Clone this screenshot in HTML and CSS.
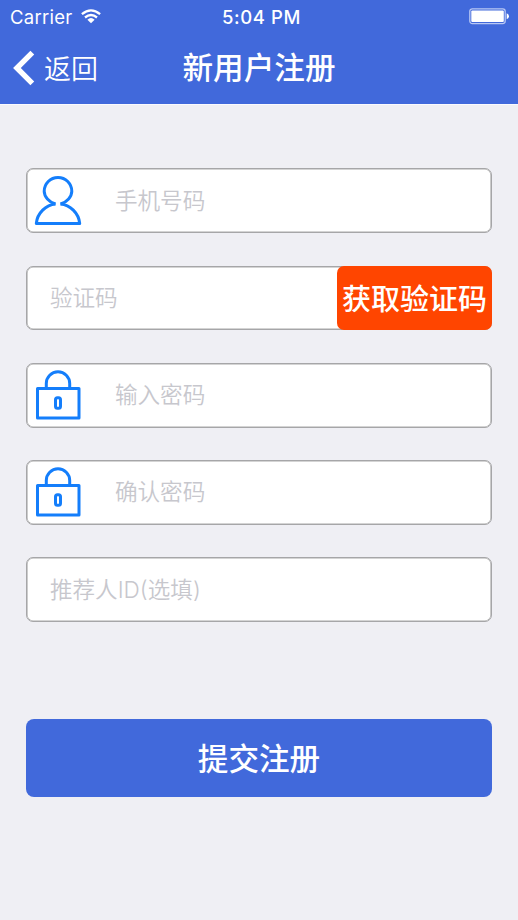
FILE: index.html
```html
<!DOCTYPE html>
<html lang="zh-CN">
<head>
<meta charset="utf-8">
<title>新用户注册</title>
<link rel="stylesheet" href="styles.css">
</head>
<body>
<header class="header">
  <div class="status">
    <div class="carrier"><span>Carrier</span>
      <svg class="wifi" width="20" height="15" viewBox="0 0 20 15" fill="none" stroke="#fff" stroke-width="2.3"><path d="M.9 5.2Q10-2.5 19.1 5.2"/><path d="M4 8.5Q10 3.5 16 8.5"/><path d="M6.4 10.8Q10 7.4 13.6 10.8L10 14.3Z" fill="#fff" stroke="none"/></svg>
    </div>
    <span class="clock">5:04 PM</span>
    <svg class="battery" width="41" height="17" viewBox="0 0 41 17"><rect x=".8" y=".8" width="35.4" height="14.8" rx="2.5" fill="none" stroke="#b8c7f4" stroke-width="1.3"/><rect x="2.3" y="2.4" width="32.5" height="11.6" rx="1" fill="#fff"/><path d="M37.7 5.2Q40 6 40 8.2T37.7 11.2Z" fill="#fff"/></svg>
  </div>
  <nav class="nav">
    <a class="back"><svg width="22" height="36" viewBox="0 0 22 36" fill="none" stroke="#fff" stroke-width="5.4"><path d="M19.300 2.600 3.900 18l15.400 15.400"/></svg><span>返回</span></a>
    <h1 class="title">新用户注册</h1>
  </nav>
</header>
<main class="form">
  <div class="field">
    <svg class="icon" width="48" height="50" viewBox="0 0 48 50" fill="none" stroke="#147efb" stroke-width="3" stroke-linejoin="round"><path d="M21.500 28C15 26.300 10.200 20.500 10.200 15.300a13.800 13.800 0 0 1 27.600 0c0 5.200-4.800 11-11.300 12.700"/><path d="M21.500 28C12 28.800 3.200 37 2.300 47.500H45.700C44.800 37 36 28.800 26.500 28"/></svg>
    <span class="hint">手机号码</span>
  </div>
  <div class="field plain">
    <span class="hint">验证码</span>
    <button class="code">获取验证码</button>
  </div>
  <div class="field">
    <svg class="icon" width="48" height="50" viewBox="0 0 48 50" fill="none" stroke="#147efb" stroke-width="3" stroke-linejoin="round"><path d="M12.300 18V13.500a11.700 11.700 0 0 1 23.400 0V18"/><path d="M3.500 18.500H45V48H3.500Z"/><rect x="21.500" y="27.800" width="5" height="10.500" rx="2"/></svg>
    <span class="hint">输入密码</span>
  </div>
  <div class="field">
    <svg class="icon" width="48" height="50" viewBox="0 0 48 50" fill="none" stroke="#147efb" stroke-width="3" stroke-linejoin="round"><path d="M12.300 18V13.500a11.700 11.700 0 0 1 23.400 0V18"/><path d="M3.500 18.500H45V48H3.500Z"/><rect x="21.500" y="27.800" width="5" height="10.500" rx="2"/></svg>
    <span class="hint">确认密码</span>
  </div>
  <div class="field plain"><span class="hint">推荐人ID(选填)</span></div>
  <button class="submit">提交注册</button>
</main>
</body>
</html>
```
FILE: styles.css
```css
* { box-sizing: border-box; }
body {
  margin: 0;
  min-height: 920px;
  background: #efeff4;
  font-family: Inter, "Noto Sans CJK SC", sans-serif;
}
button { border: 0; padding: 0; font-family: inherit; color: #fff; }
.header { height: 103.6px; background: #4169db; color: #fff; box-shadow: 0 1px #fafafe; }
.status {
  display: grid;
  grid-template-columns: 1fr auto 1fr;
  align-items: center;
  height: 33px;
  padding: 0 8px 0 10px;
}
.carrier { display: flex; align-items: center; gap: 9px; font-size: 18.5px; letter-spacing: .25px; }
.wifi { display: block; }
.clock { padding-left: 3px; font-size: 18.5px; font-weight: 500; letter-spacing: .6px; }
.battery { justify-self: end; }
.nav {
  display: grid;
  grid-template-columns: 1fr auto 1fr;
  align-items: center;
  height: 69px;
  padding: 0 13px;
}
.back { display: flex; align-items: center; gap: 9px; font-size: 27px; font-weight: 350; }
.title { margin: 0; font-size: 30.6px; font-weight: 500; line-height: 44px; }
.form { padding: 64.8px 25.9px 0; }
.field {
  display: flex;
  align-items: center;
  height: 64.8px;
  margin-bottom: 32.4px;
  padding-left: 7px;
  border: 1px solid #a6a6a8;
  border-radius: 7px;
  background: #fff;
  box-shadow: inset 0 0 0 .6px #a9a9a9;
}
.icon { flex: none; margin-right: 33px; }
.hint { color: #c7c7cd; font-size: 22.6px; font-weight: 350; line-height: 32px; }
.plain { padding-left: 23px; }
.code {
  width: 155.2px;
  height: 64.8px;
  margin: -1px -1px -1px auto;
  padding-bottom: 2px;
  border-radius: 7px;
  background: #ff4500;
  font-size: 29px;
  font-weight: 500;
}
.submit {
  display: block;
  width: 100%;
  height: 77.7px;
  margin-top: 97.1px;
  padding-bottom: 2px;
  border-radius: 8px;
  background: #4169db;
  font-size: 30.6px;
  font-weight: 500;
}
```
